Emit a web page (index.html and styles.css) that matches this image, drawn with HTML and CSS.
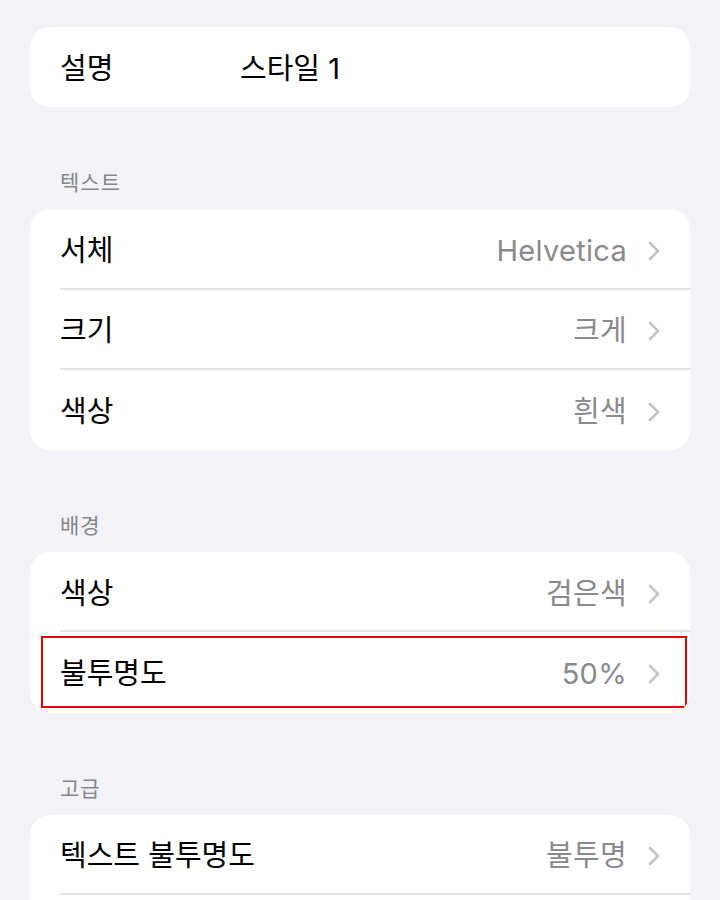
FILE: index.html
```html
<!DOCTYPE html>
<html lang="ko">
<head>
<meta charset="utf-8">
<link rel="stylesheet" href="styles.css">
</head>
<body>
<main class="page">
  <div class="card">
    <div class="row">
      <span class="label label-fixed">설명</span>
      <span class="label">스타일 1</span>
    </div>
  </div>

  <div class="section-title">텍스트</div>
  <div class="card">
    <div class="row sep">
      <span class="label">서체</span>
      <span class="value">Helvetica</span>
      <svg class="chev" viewBox="0 0 14 22"><polyline points="3,3 11,11 3,19"/></svg>
    </div>
    <div class="row sep">
      <span class="label">크기</span>
      <span class="value">크게</span>
      <svg class="chev" viewBox="0 0 14 22"><polyline points="3,3 11,11 3,19"/></svg>
    </div>
    <div class="row">
      <span class="label">색상</span>
      <span class="value">흰색</span>
      <svg class="chev" viewBox="0 0 14 22"><polyline points="3,3 11,11 3,19"/></svg>
    </div>
  </div>

  <div class="section-title">배경</div>
  <div class="card">
    <div class="row sep">
      <span class="label">색상</span>
      <span class="value">검은색</span>
      <svg class="chev" viewBox="0 0 14 22"><polyline points="3,3 11,11 3,19"/></svg>
    </div>
    <div class="row">
      <span class="label">불투명도</span>
      <span class="value">50%</span>
      <svg class="chev" viewBox="0 0 14 22"><polyline points="3,3 11,11 3,19"/></svg>
      <span class="highlight-box"></span>
    </div>
  </div>

  <div class="section-title">고급</div>
  <div class="card">
    <div class="row sep">
      <span class="label">텍스트 불투명도</span>
      <span class="value">불투명</span>
      <svg class="chev" viewBox="0 0 14 22"><polyline points="3,3 11,11 3,19"/></svg>
    </div>
    <div class="row">
      <span class="label">&nbsp;</span>
    </div>
  </div>
</main>
</body>
</html>
```
FILE: styles.css
```css
html, body {
  margin: 0;
  padding: 0;
  background: #f2f2f7;
}
body {
  font-family: "Inter", "Noto Sans CJK KR", sans-serif;
  color: #000;
  overflow: hidden;
  height: 900px;
}
.page {
  display: flex;
  flex-direction: column;
  padding: 27px 30px 0;
}
.card {
  background: #fff;
  border-radius: 20px;
  overflow: hidden;
  flex: 0 0 auto;
}
.section-title {
  font-family: "Noto Sans CJK KR", sans-serif;
  font-size: 21px;
  letter-spacing: 1px;
  line-height: 24px;
  color: #86868b;
  padding-left: 30px;
  margin-top: 62px;
  margin-bottom: 16px;
}
.row {
  position: relative;
  height: 80.3px;
  box-sizing: border-box;
  display: flex;
  align-items: center;
  padding: 3px 29px 0 30px;
}
.row.sep::after {
  content: "";
  position: absolute;
  left: 30px;
  right: 0;
  bottom: 0;
  height: 2px;
  background: #e3e3e7;
}
.label {
  font-size: 29px;
  line-height: 34px;
  flex: 0 0 auto;
}
.label-fixed {
  width: 180px;
}
.value {
  margin-left: auto;
  font-size: 29px;
  line-height: 34px;
  letter-spacing: 0.3px;
  color: #8a8a8e;
}
.chev {
  width: 14px;
  height: 22px;
  margin-left: 20px;
  flex: 0 0 auto;
}
.chev polyline {
  fill: none;
  stroke: #c4c4c7;
  stroke-width: 2.6;
  stroke-linecap: round;
  stroke-linejoin: round;
}
.highlight-box {
  position: absolute;
  top: 4px;
  bottom: 5px;
  left: 11px;
  right: 3px;
  border: 2px solid #ee0000;
  pointer-events: none;
}
```
